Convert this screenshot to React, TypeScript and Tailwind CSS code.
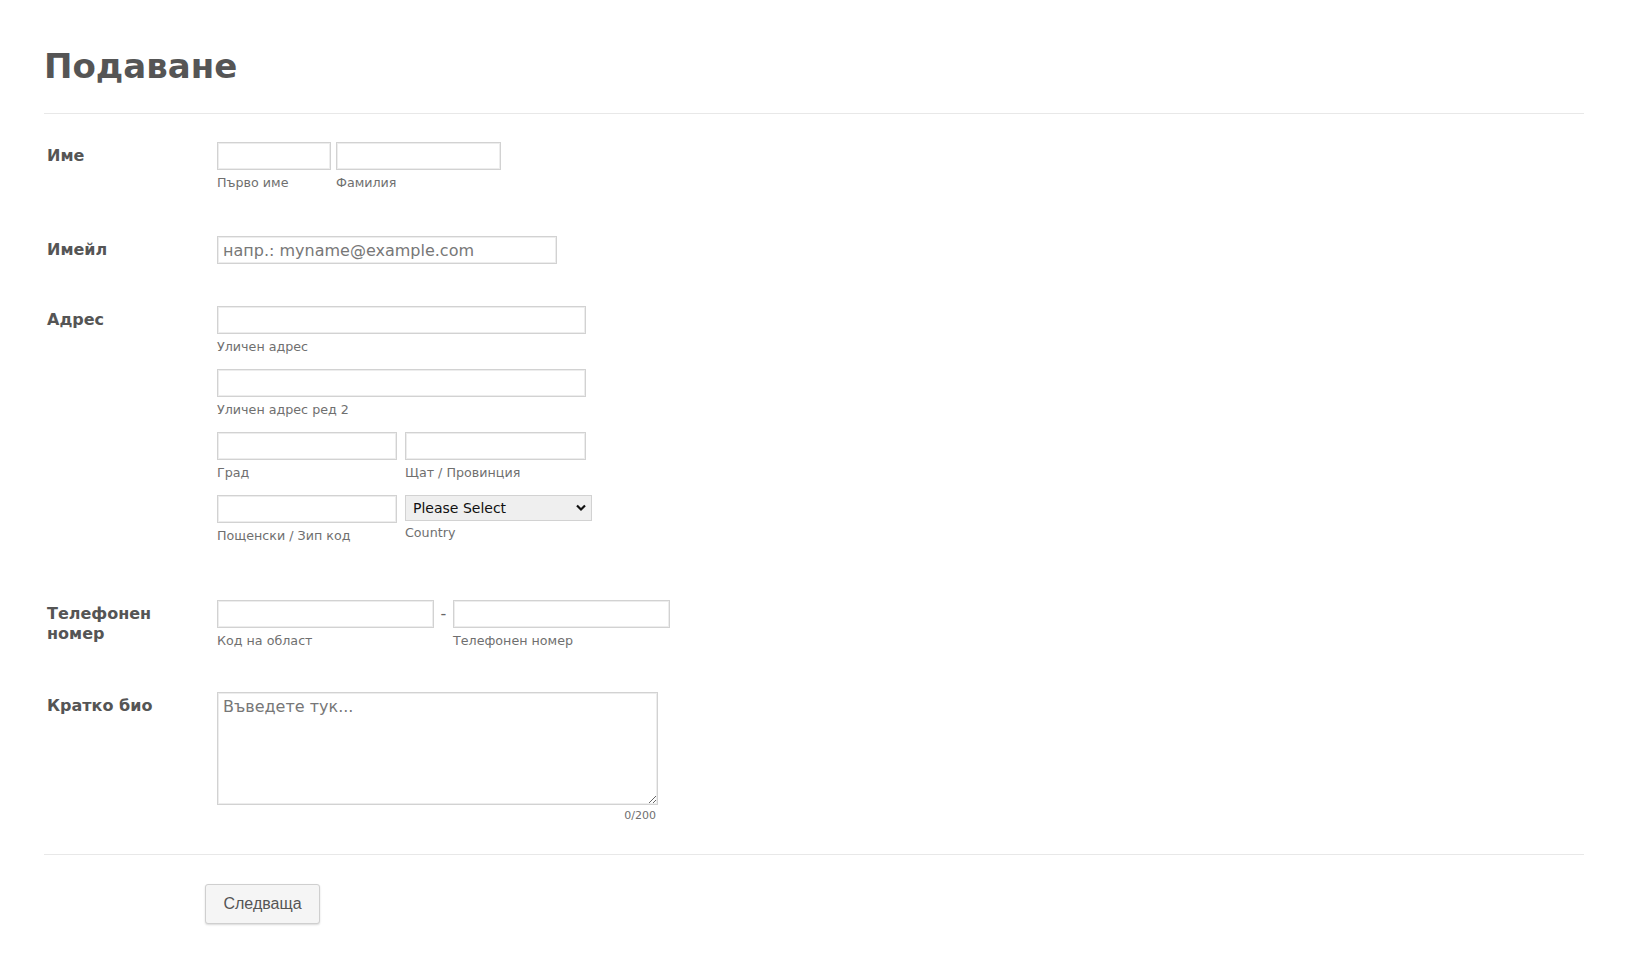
import React from "react";

// Shared input look: light double-ish border like the classic form theme
const inputCls =
  "h-[28px] border border-[#d2d2d2] bg-white px-[5px] text-[16px] text-[#333] shadow-[inset_0_0_0_1px_#ededed] outline-none placeholder:text-[#777]";

const SubLabel = ({ children }: { children: React.ReactNode }) => (
  <div className="mt-[6px] text-[12.7px] leading-[14px] text-[#6f6f6f]">{children}</div>
);

const Row = ({
  label,
  className,
  children,
}: {
  label: React.ReactNode;
  className?: string;
  children: React.ReactNode;
}) => (
  <div className={`flex ${className ?? ""}`}>
    <div className="w-[173px] shrink-0 pl-[3px] pt-[4px] text-[16px] font-bold leading-[20px] text-[#555]">
      {label}
    </div>
    <div className="flex flex-col">{children}</div>
  </div>
);

export default function App() {
  return (
    <div className="min-h-screen bg-white font-['DejaVu_Sans',sans-serif] text-[#555]">
      <div className="px-[44px] pt-[42px]">
        <h1 className="border-b border-[#e8e8e8] pb-[23px] text-[34px] font-bold leading-[48px] text-[#555]">
          Подаване
        </h1>

        <Row label="Име" className="mt-[28px]">
          <div className="flex gap-[5px]">
            <div>
              <input className={`${inputCls} w-[114px]`} />
              <SubLabel>Първо име</SubLabel>
            </div>
            <div>
              <input className={`${inputCls} w-[165px]`} />
              <SubLabel>Фамилия</SubLabel>
            </div>
          </div>
        </Row>

        <Row label="Имейл" className="mt-[46px]">
          <input
            className={`${inputCls} w-[340px] text-[16.4px]`}
            placeholder="напр.: myname@example.com"
          />
        </Row>

        <Row label="Адрес" className="mt-[42px]">
          <div className="flex flex-col gap-[15px]">
            <div>
              <input className={`${inputCls} w-[369px]`} />
              <SubLabel>Уличен адрес</SubLabel>
            </div>
            <div>
              <input className={`${inputCls} w-[369px]`} />
              <SubLabel>Уличен адрес ред 2</SubLabel>
            </div>
            <div className="flex gap-[8px]">
              <div>
                <input className={`${inputCls} w-[180px]`} />
                <SubLabel>Град</SubLabel>
              </div>
              <div>
                <input className={`${inputCls} w-[181px]`} />
                <SubLabel>Щат / Провинция</SubLabel>
              </div>
            </div>
            <div className="flex gap-[8px]">
              <div>
                <input className={`${inputCls} w-[180px]`} />
                <SubLabel>Пощенски / Зип код</SubLabel>
              </div>
              <div>
                <div className="relative w-[187px]">
                  <select className="h-[26px] w-full appearance-none border border-[#d2d2d2] bg-[#efefef] pl-[7px] text-[14px] text-[#111] outline-none">
                    <option>Please Select</option>
                  </select>
                  <svg
                    className="pointer-events-none absolute right-[6px] top-[9px]"
                    width="10"
                    height="8"
                    viewBox="0 0 10 8"
                  >
                    <path d="M1 1.5 L5 5.5 L9 1.5" fill="none" stroke="#111" strokeWidth="2.2" />
                  </svg>
                </div>
                <div className="mt-[5px] text-[12.7px] leading-[14px] text-[#6f6f6f]">Country</div>
              </div>
            </div>
          </div>
        </Row>

        <Row
          label={
            <>
              Телефонен
              <br />
              номер
            </>
          }
          className="mt-[57px]"
        >
          <div className="flex">
            <div>
              <input className={`${inputCls} w-[217px]`} />
              <SubLabel>Код на област</SubLabel>
            </div>
            <div className="w-[19px] pt-[3px] text-center text-[16px] leading-[22px] text-[#666]">-</div>
            <div>
              <input className={`${inputCls} w-[217px]`} />
              <SubLabel>Телефонен номер</SubLabel>
            </div>
          </div>
        </Row>

        <Row label="Кратко био" className="mt-[44px]">
          <textarea
            className="h-[113px] w-[441px] border border-[#d2d2d2] px-[5px] py-[3px] text-[16px] leading-[22px] text-[#333] shadow-[inset_0_0_0_1px_#ededed] outline-none placeholder:text-[#777]"
            placeholder="Въведете тук..."
          />
          <div className="mt-[4px] pr-[2px] text-right text-[11px] leading-[13px] text-[#6f6f6f]">0/200</div>
        </Row>

        <div className="mt-[32px] border-t border-[#e8e8e8] pt-[29px]">
          <button className="ml-[161px] h-[40px] w-[115px] rounded-[3px] border border-[#cfcfcf] bg-[#f5f5f5] font-['Liberation_Sans',sans-serif] text-[16px] text-[#555] shadow-[0_1px_2px_rgba(0,0,0,0.15)]">
            Следваща
          </button>
        </div>
      </div>
    </div>
  );
}
